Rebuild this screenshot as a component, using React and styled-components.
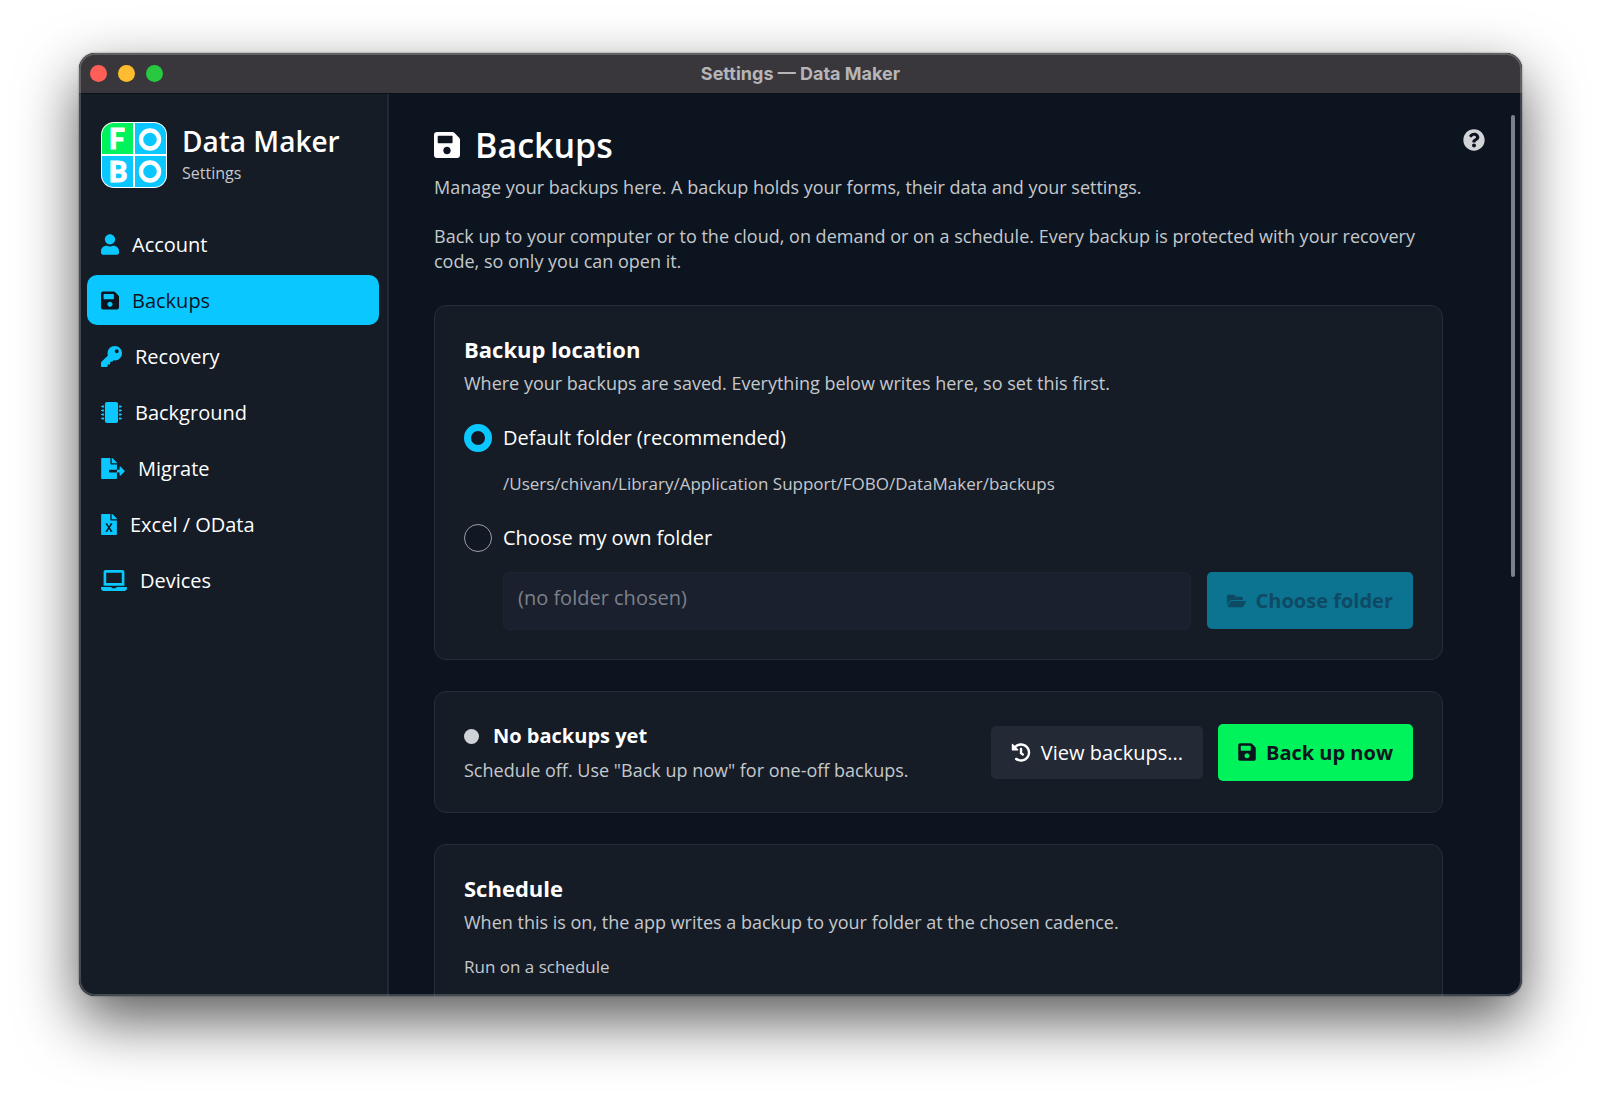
import React, { useState } from "react";
import styled, { createGlobalStyle, css } from "styled-components";
import {
  FaUser,
  FaSave,
  FaKey,
  FaMicrochip,
  FaFileExport,
  FaLaptop,
  FaHistory,
  FaFolderOpen,
  FaQuestionCircle,
} from "react-icons/fa";

const ExcelIcon = () => (
  <svg viewBox="0 0 384 512" fill="currentColor" aria-hidden="true">
    <path d="M24 0h200v136c0 13 11 24 24 24h136v328c0 13-11 24-24 24H24c-13 0-24-11-24-24V24C0 11 11 0 24 0zM384 122v6H256V0h6c6 0 12 3 17 7l98 98c4 5 7 11 7 17z" />
    <path d="M128 238l126 188M254 238L128 426" stroke="#151c26" strokeWidth="36" fill="none" />
    <path d="M108 238h44M230 238h44M108 426h44M230 426h44" stroke="#151c26" strokeWidth="16" fill="none" />
  </svg>
);

const navItems = [
  { id: "account", label: "Account", icon: <FaUser />, iconWidth: 18 },
  { id: "backups", label: "Backups", icon: <FaSave />, iconWidth: 18 },
  { id: "recovery", label: "Recovery", icon: <FaKey />, iconWidth: 21 },
  { id: "background", label: "Background", icon: <FaMicrochip />, iconWidth: 21 },
  { id: "migrate", label: "Migrate", icon: <FaFileExport />, iconWidth: 24 },
  { id: "excel", label: "Excel / OData", icon: <ExcelIcon />, iconWidth: 16 },
  { id: "devices", label: "Devices", icon: <FaLaptop />, iconWidth: 26 },
];

const Logo = () => (
  <LogoSvg viewBox="0 0 66 66" role="img" aria-label="FOBO">
    <defs>
      <clipPath id="logo-clip">
        <rect x="1" y="1" width="64" height="64" rx="12" />
      </clipPath>
    </defs>
    <rect width="66" height="66" rx="13" fill="#fff" />
    <g clipPath="url(#logo-clip)">
      <rect x="1" y="1" width="31" height="31" fill="#00f35a" />
      <rect x="34" y="1" width="31" height="31" fill="#0ac8ff" />
      <rect x="1" y="34" width="31" height="31" fill="#0ac8ff" />
      <rect x="34" y="34" width="31" height="31" fill="#0ac8ff" />
    </g>
    <LogoLetter x="16" y="27">F</LogoLetter>
    <LogoLetter x="17" y="60">B</LogoLetter>
    <circle cx="49" cy="17.5" r="9" fill="none" stroke="#fff" strokeWidth="4.4" />
    <circle cx="49" cy="49.5" r="9" fill="none" stroke="#fff" strokeWidth="4.4" />
  </LogoSvg>
);

const App = () => {
  const [active, setActive] = useState("backups");
  const [location, setLocation] = useState("default");

  return (
    <Desktop>
      <GlobalStyle />
      <Window>
        <TitleBar>
          <Lights>
            <Light $color="#ff5f57" aria-label="Close" />
            <Light $color="#febc2e" aria-label="Minimize" />
            <Light $color="#28c840" aria-label="Zoom" />
          </Lights>
          <WindowTitle>Settings — Data Maker</WindowTitle>
        </TitleBar>
        <Body>
          <Sidebar>
            <Brand>
              <Logo />
              <div>
                <BrandName>Data Maker</BrandName>
                <BrandSub>Settings</BrandSub>
              </div>
            </Brand>
            <Nav>
              {navItems.map((item) => (
                <NavLink
                  key={item.id}
                  href={`#${item.id}`}
                  $active={active === item.id}
                  onClick={() => setActive(item.id)}
                >
                  <IconBox $width={item.iconWidth} $height={21}>
                    {item.icon}
                  </IconBox>
                  {item.label}
                </NavLink>
              ))}
            </Nav>
          </Sidebar>

          <Main>
            <Content>
              <PageTitle>
                <IconBox $width={26} $height={30}>
                  <FaSave />
                </IconBox>
                Backups
              </PageTitle>
              <Lead>Manage your backups here. A backup holds your forms, their data and your settings.</Lead>
              <Lead>
                Back up to your computer or to the cloud, on demand or on a schedule. Every backup is protected with
                your recovery code, so only you can open it.
              </Lead>

              <Card>
                <CardTitle>Backup location</CardTitle>
                <CardText>Where your backups are saved. Everything below writes here, so set this first.</CardText>
                <RadioRow>
                  <Radio
                    name="location"
                    checked={location === "default"}
                    onChange={() => setLocation("default")}
                  />
                  Default folder (recommended)
                </RadioRow>
                <FolderPath>/Users/chivan/Library/Application Support/FOBO/DataMaker/backups</FolderPath>
                <RadioRow>
                  <Radio
                    name="location"
                    checked={location === "custom"}
                    onChange={() => setLocation("custom")}
                  />
                  Choose my own folder
                </RadioRow>
                <FolderRow>
                  <FolderInput
                    aria-label="Backup folder"
                    placeholder="(no folder chosen)"
                    disabled={location === "default"}
                    readOnly
                  />
                  <Button $variant="primary" disabled={location === "default"}>
                    <IconBox $width={19} $height={18}>
                      <FaFolderOpen />
                    </IconBox>
                    Choose folder
                  </Button>
                </FolderRow>
              </Card>

              <Card>
                <StatusRow>
                  <div>
                    <StatusTitle>
                      <StatusDot />
                      No backups yet
                    </StatusTitle>
                    <CardText>Schedule off. Use "Back up now" for one-off backups.</CardText>
                  </div>
                  <Actions>
                    <Button>
                      <IconBox $width={20} $height={19}>
                        <FaHistory />
                      </IconBox>
                      View backups...
                    </Button>
                    <Button $variant="success">
                      <IconBox $width={18} $height={20}>
                        <FaSave />
                      </IconBox>
                      Back up now
                    </Button>
                  </Actions>
                </StatusRow>
              </Card>

              <Card>
                <CardTitle>Schedule</CardTitle>
                <CardText>When this is on, the app writes a backup to your folder at the chosen cadence.</CardText>
                <FieldLabel>Run on a schedule</FieldLabel>
              </Card>
            </Content>
            <HelpButton aria-label="Help">
              <FaQuestionCircle />
            </HelpButton>
            <ScrollThumb />
          </Main>
        </Body>
      </Window>
    </Desktop>
  );
};

const GlobalStyle = createGlobalStyle`
  * {
    box-sizing: border-box;
  }

  body {
    margin: 0;
    background: #fff;
    color: #fff;
    font-family: "Open Sans", "Noto Sans", sans-serif;
    font-size: 20px;
  }

  button,
  input {
    font: inherit;
  }

  svg {
    display: block;
    flex-shrink: 0;
  }
`;

const Desktop = styled.div`
  display: flex;
  height: 100vh;
  padding: 53px 78px 103px 79px;
  overflow: hidden;
`;

const Window = styled.div`
  position: relative;
  flex: 1;
  display: flex;
  flex-direction: column;
  min-width: 0;
  border-radius: 16px;
  overflow: hidden;
  background: #0c141f;
  box-shadow: 0 0 2px rgba(0, 0, 0, 0.5), 0 24px 60px rgba(0, 0, 0, 0.65);

  /* light rim that macOS draws over the window edge */
  &::after {
    content: "";
    position: absolute;
    inset: 0;
    border: 2px solid rgba(255, 255, 255, 0.2);
    border-radius: 16px;
    pointer-events: none;
  }
`;

const TitleBar = styled.header`
  position: relative;
  display: flex;
  align-items: center;
  justify-content: center;
  height: 41px;
  flex-shrink: 0;
  background: #39373b;
  border-bottom: 1px solid #0b0f17;
`;

const Lights = styled.div`
  position: absolute;
  left: 11px;
  display: flex;
  gap: 11px;
`;

const Light = styled.button`
  width: 17px;
  height: 17px;
  padding: 0;
  border: 0;
  border-radius: 50%;
  background: ${({ $color }) => $color};
`;

const WindowTitle = styled.span`
  color: #b6b5b8;
  font-family: Inter, sans-serif;
  font-size: 18px;
  font-weight: 700;
`;

const Body = styled.div`
  flex: 1;
  display: flex;
  min-height: 0;
`;

const Sidebar = styled.aside`
  width: 310px;
  flex-shrink: 0;
  padding: 28px 8px;
  background: #151c26;
  border-right: 2px solid #222a35;
`;

const Brand = styled.div`
  display: flex;
  align-items: center;
  gap: 15px;
  padding: 0 14px;
`;

const LogoSvg = styled.svg`
  width: 66px;
  height: 66px;
  overflow: visible;
`;

const LogoLetter = styled.text`
  fill: #fff;
  font-family: Lato, sans-serif;
  font-size: 28px;
  font-weight: 900;
  stroke: #fff;
  stroke-width: 1px;
  text-anchor: middle;
`;

const BrandName = styled.div`
  font-size: 28px;
  font-weight: 600;
  line-height: 36px;
`;

const BrandSub = styled.div`
  color: #c5c8cc;
  font-size: 16px;
  line-height: 28px;
`;

const IconBox = styled.span`
  flex-shrink: 0;

  svg {
    width: ${({ $width }) => $width}px;
    height: ${({ $height }) => $height}px;
  }
`;

const Nav = styled.nav`
  display: flex;
  flex-direction: column;
  gap: 6px;
  margin-top: 31px;
`;

const NavLink = styled.a`
  display: flex;
  align-items: center;
  gap: 13px;
  height: 50px;
  padding: 0 14px;
  border-radius: 10px;
  color: #fff;
  font-weight: 500;
  text-decoration: none;

  svg {
    color: #0ac8ff;
  }

  ${({ $active }) =>
    $active &&
    css`
      background: #0ac8ff;
      color: #0c141f;

      svg {
        color: #0c141f;
      }
    `}
`;

const Main = styled.main`
  position: relative;
  flex: 1;
  min-width: 0;
  overflow: hidden;
`;

const Content = styled.div`
  padding: 29px 79px 0 45px;
`;

const PageTitle = styled.h1`
  display: flex;
  align-items: center;
  gap: 15px;
  margin: 0 0 8px;
  font-size: 34px;
  font-weight: 600;
  line-height: 44px;
`;

const Lead = styled.p`
  margin: 0 0 24px;
  color: #c5c8cc;
  font-size: 18px;
  font-weight: 500;
  line-height: 25px;
`;

const Card = styled.section`
  margin-top: 31px;
  padding: 29px;
  border: 1px solid #252e39;
  border-radius: 12px;
  background: #151c26;
`;

const CardTitle = styled.h2`
  margin: 0 0 8px;
  font-size: 22px;
  font-weight: 700;
  line-height: 28px;
`;

const CardText = styled.p`
  margin: 0;
  color: #c5c8cc;
  font-size: 18px;
  font-weight: 500;
  line-height: 25px;
`;

const RadioRow = styled.label`
  display: flex;
  align-items: center;
  gap: 11px;
  margin-top: 26px;
  font-weight: 500;
  line-height: 32px;
`;

const Radio = styled.input.attrs({ type: "radio" })`
  appearance: none;
  width: 28px;
  height: 28px;
  margin: 0;
  border: 1px solid #9a9fa8;
  border-radius: 50%;
  background: #121823;

  &:checked {
    border: 7px solid #0ac8ff;
  }
`;

const FolderPath = styled.div`
  margin-top: 17px;
  padding-left: 39px;
  color: #c5c8cc;
  font-size: 17px;
  line-height: 25px;
`;

const FolderRow = styled.div`
  display: flex;
  gap: 16px;
  margin-top: 18px;
  padding-left: 39px;
`;

const FolderInput = styled.input`
  flex: 1;
  min-width: 0;
  height: 58px;
  padding: 0 14px 8px;
  border: 1px solid #1e2531;
  border-radius: 6px;
  background: #1a202d;
  color: #fff;

  &::placeholder {
    color: #7c818b;
    opacity: 1;
  }
`;

const variants = {
  primary: css`
    height: 57px;
    background: #0ac8ff;
    color: #0c141f;
    font-weight: 700;
  `,
  success: css`
    height: 57px;
    background: #00f35a;
    color: #0c141f;
    font-weight: 700;
  `,
};

const Button = styled.button`
  display: flex;
  align-items: center;
  gap: 10px;
  height: 53px;
  padding: 0 20px;
  border: 0;
  border-radius: 5px;
  background: #242936;
  color: #fff;
  font-weight: 500;
  white-space: nowrap;

  ${({ $variant }) => variants[$variant]}

  &:disabled {
    background: #0c7391;
    color: #0e4a64;
  }
`;

const StatusRow = styled.div`
  display: flex;
  align-items: center;
  justify-content: space-between;
  gap: 16px;
`;

const StatusTitle = styled.h2`
  display: flex;
  align-items: center;
  gap: 14px;
  margin: 0 0 7px;
  font-size: 20px;
  font-weight: 700;
  line-height: 30px;
`;

const StatusDot = styled.span`
  width: 15px;
  height: 15px;
  border-radius: 50%;
  background: #cfd3d7;
`;

const Actions = styled.div`
  display: flex;
  align-items: center;
  gap: 15px;
`;

const FieldLabel = styled.div`
  margin-top: 18px;
  color: #c5c8cc;
  font-size: 17px;
  line-height: 28px;
`;

const HelpButton = styled.button`
  position: absolute;
  top: 35px;
  right: 37px;
  padding: 0;
  border: 0;
  background: none;
  color: #d3d4d8;
  font-size: 22px;
`;

const ScrollThumb = styled.div`
  position: absolute;
  top: 21px;
  right: 7px;
  width: 4px;
  height: 462px;
  border-radius: 2px;
  background: #7b818b;
`;

export default App;
